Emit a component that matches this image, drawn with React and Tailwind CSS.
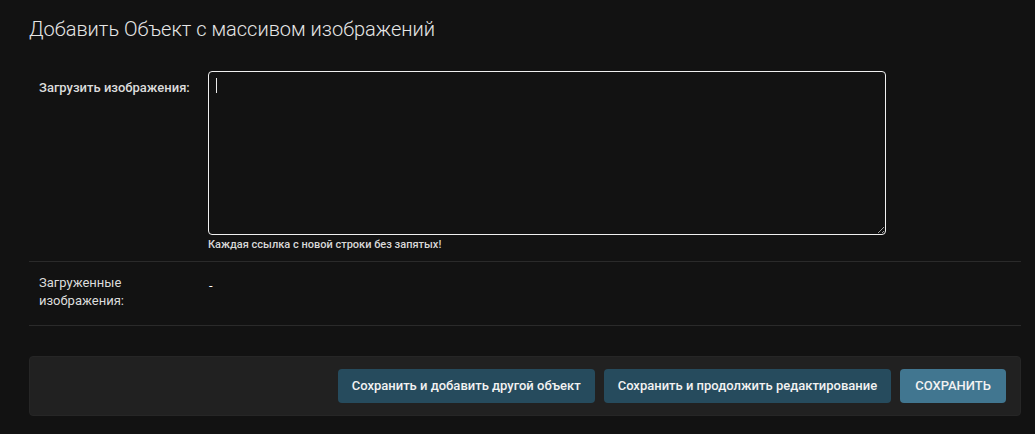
export default function App() {
  return (
    <div className="min-h-screen bg-[#121212] pl-[29px] pr-[14px] pt-[17px] pb-[18px] text-[#e0e0e0] [font-family:Roboto,'Liberation_Sans',sans-serif]">
      <h1 className="text-[20px] leading-[24px] font-light text-[#e6e6e6] m-0">Добавить Объект с массивом изображений</h1>

      <fieldset className="mt-[20px]">
        {/* Row: upload */}
        <div className="flex px-[10px] pt-[10px] pb-[8px] border-b border-[#2a2a2a]">
          <label className="w-[169px] shrink-0 pt-[8px] text-[13px] leading-[18px] font-medium text-[#dcdcdc]">Загрузить изображения:</label>
          <div className="flex flex-col">
            <div className="relative">
              <textarea className="block w-[678px] h-[164px] bg-[#121212] border border-[#f0f0f0] rounded-[4px] outline-none text-[13px] text-white px-[7px] py-[5px]" />
              <span className="absolute left-[8px] top-[7px] w-px h-[15px] bg-[#eaeaea]" />
            </div>
            <div className="pt-[2px] text-[11px] leading-[16px] font-medium text-[#d8d8d8]">Каждая ссылка с новой строки без запятых!</div>
          </div>
        </div>

        {/* Row: uploaded */}
        <div className="flex px-[10px] pt-[12px] pb-[15px] border-b border-[#2a2a2a]">
          <div className="w-[170px] shrink-0 text-[13px] leading-[18px] text-[#dcdcdc]">
            Загруженные<br />изображения:
          </div>
          <div className="text-[13px] leading-[18px] pt-[3px] text-white">-</div>
        </div>
      </fieldset>

      <div className="mt-[30px] flex justify-end gap-[9px] bg-[#212121] border border-[#262626] rounded-[4px] pl-[12px] pr-[14px] py-[12px]">
        <button className="h-[34px] px-[14px] rounded-[4px] bg-[#264b5d] text-[13px] font-medium text-[#f2f2f2]">Сохранить и добавить другой объект</button>
        <button className="h-[34px] px-[14px] rounded-[4px] bg-[#264b5d] text-[13px] font-medium text-[#f2f2f2]">Сохранить и продолжить редактирование</button>
        <button className="h-[34px] px-[15px] rounded-[4px] bg-[#417690] text-[13px] font-medium text-[#f2f2f2]">СОХРАНИТЬ</button>
      </div>
    </div>
  )
}
